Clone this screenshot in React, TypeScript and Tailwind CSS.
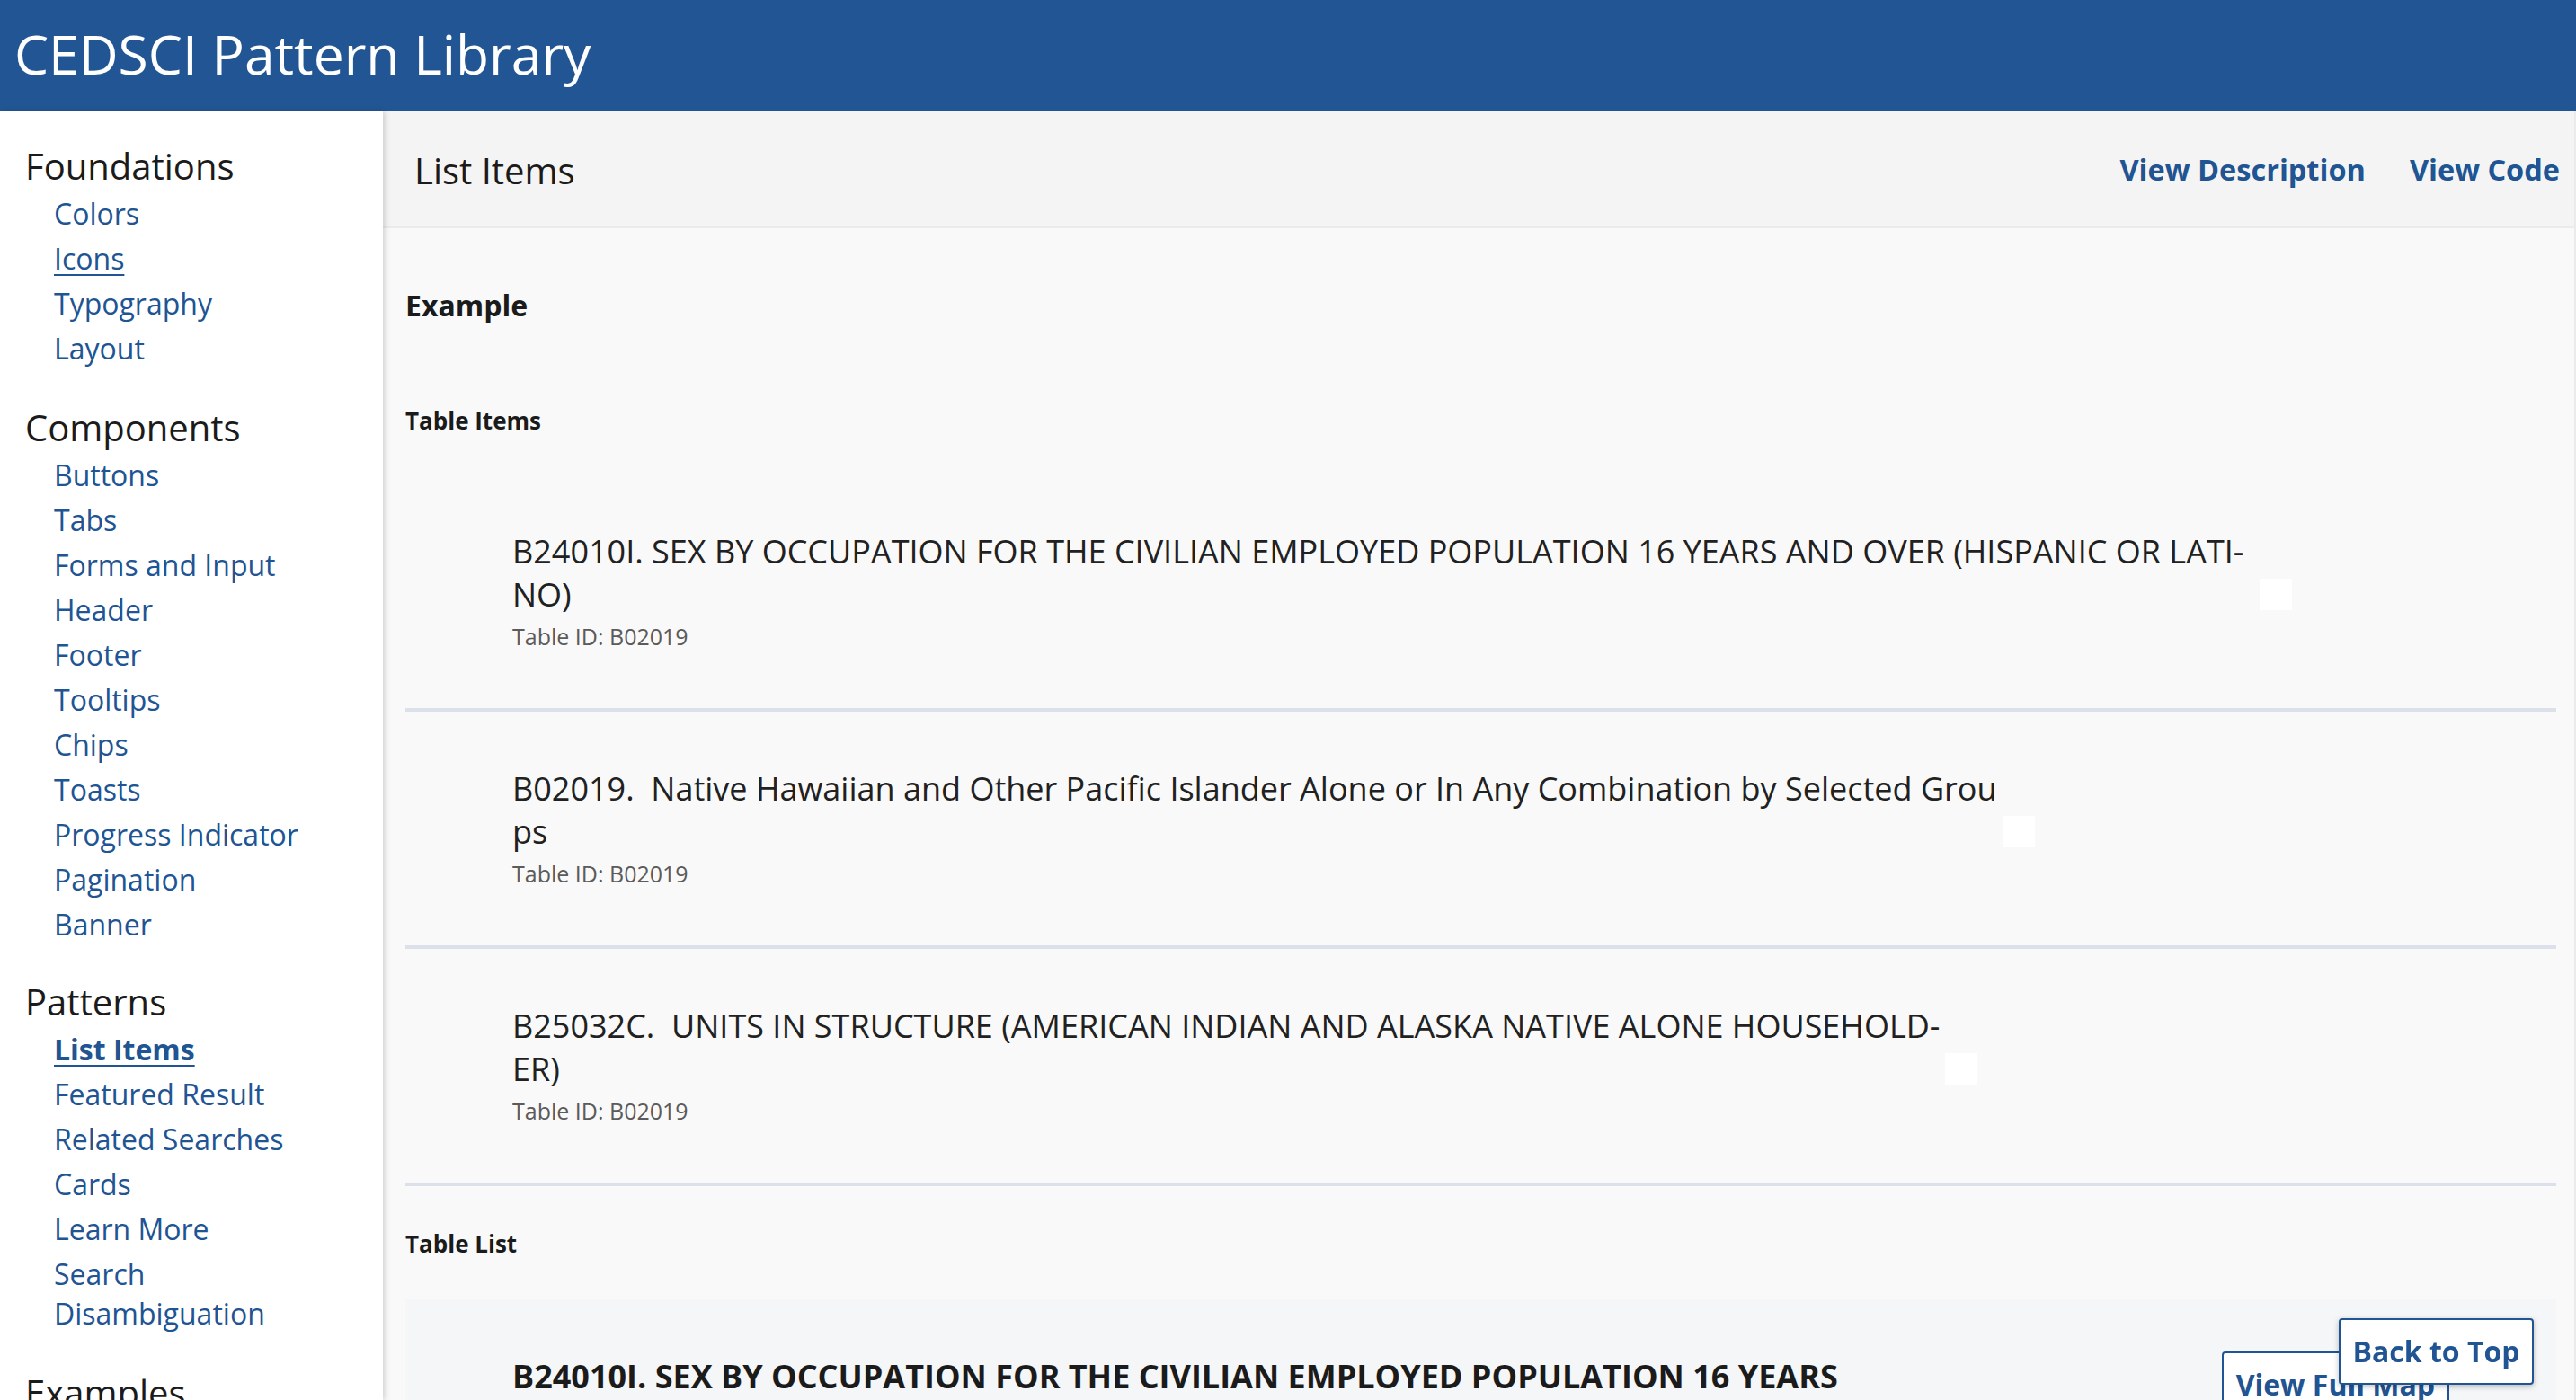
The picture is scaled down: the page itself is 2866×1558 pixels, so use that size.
import React from 'react'

type NavGroup = {
  title: string
  links: { label: string; active?: boolean; underline?: boolean }[]
}

const NAV: NavGroup[] = [
  {
    title: 'Foundations',
    links: [{ label: 'Colors' }, { label: 'Icons', underline: true }, { label: 'Typography' }, { label: 'Layout' }],
  },
  {
    title: 'Components',
    links: [
      { label: 'Buttons' },
      { label: 'Tabs' },
      { label: 'Forms and Input' },
      { label: 'Header' },
      { label: 'Footer' },
      { label: 'Tooltips' },
      { label: 'Chips' },
      { label: 'Toasts' },
      { label: 'Progress Indicator' },
      { label: 'Pagination' },
      { label: 'Banner' },
    ],
  },
  {
    title: 'Patterns',
    links: [
      { label: 'List Items', active: true },
      { label: 'Featured Result' },
      { label: 'Related Searches' },
      { label: 'Cards' },
      { label: 'Learn More' },
      { label: 'Search Disambiguation' },
    ],
  },
  {
    title: 'Examples',
    links: [{ label: 'Search Results' }, { label: 'Table View' }],
  },
]

const ITEMS = [
  {
    lines: ['B24010I. SEX BY OCCUPATION FOR THE CIVILIAN EMPLOYED POPULATION 16 YEARS AND OVER (HISPANIC OR LATI-', 'NO)'],
    extra: 'pr-[12px]',
  },
  {
    lines: ['B02019.\u00a0 Native Hawaiian and Other Pacific Islander Alone or In Any Combination by Selected Grou', 'ps'],
    extra: '',
  },
  {
    lines: ['B25032C.\u00a0 UNITS IN STRUCTURE (AMERICAN INDIAN AND ALASKA NATIVE ALONE HOUSEHOLD-', 'ER)'],
    extra: '',
  },
]

function Sidebar() {
  return (
    <aside className="relative z-10 w-[426px] shrink-0 bg-white pt-[33px] pl-[28px] pr-[40px] shadow-[3px_0_6px_rgba(0,0,0,0.14)]">
      {NAV.map((group, gi) => (
        <div key={group.title} className={gi === 1 ? 'mb-[33px]' : 'mb-[35px]'}>
          <h2 className="text-[40px] leading-[56px] text-[#1b1b1b]">{group.title}</h2>
          <ul>
            {group.links.map((link) => (
              <li key={link.label} className="pl-[32px] py-[3px]">
                <a
                  href="#"
                  className={`text-[32px] leading-[44px] text-[#205493] ${
                    link.active ? 'font-bold underline decoration-2 underline-offset-[5px]' : ''
                  } ${link.underline ? 'underline decoration-2 underline-offset-[5px]' : ''}`}
                >
                  {link.label}
                </a>
              </li>
            ))}
          </ul>
        </div>
      ))}
    </aside>
  )
}

export default function App() {
  return (
    <div className="h-screen overflow-hidden bg-[#f9f9f9] font-['Open_Sans',sans-serif] text-[#1b1b1b] flex flex-col">
      {/* Header */}
      <header className="h-[124px] shrink-0 bg-[#225593] flex items-center pl-[16px]">
        <h1 className="text-[60.5px] leading-none text-white -mt-[3px]">CEDSCI Pattern Library</h1>
      </header>

      <div className="flex flex-1 min-h-0">
        <Sidebar />

        <main className="flex-1 min-w-0 border-r-2 border-[#ebebeb]">
          {/* Title bar */}
          <div className="h-[130px] bg-[#f4f4f4] border-b-2 border-[#ebebeb] flex items-center justify-between pt-[3px] pl-[35px] pr-[16px]">
            <h2 className="text-[40px] leading-[56px]">List Items</h2>
            <div className="flex gap-[49px]">
              <a href="#" className="text-[32.5px] font-bold text-[#205493]">
                View Description
              </a>
              <a href="#" className="text-[32.5px] font-bold text-[#205493]">
                View Code
              </a>
            </div>
          </div>

          {/* Body */}
          <div className="pt-[64px] pl-[25px] pr-[20px]">
            <h3 className="text-[32px] leading-[44px] font-bold">Example</h3>
            <h4 className="mt-[88px] text-[26px] leading-[36px] font-bold">Table Items</h4>

            <ul className="mt-[42px]">
              {ITEMS.map((item, i) => (
                <li key={i} className="border-b-4 border-[#dce0ea] pl-[119px] pt-[62px] pb-[64px]">
                  <div className="flex items-end gap-[6px]">
                    <p className={`text-[36px] leading-[48px] text-[#212121] whitespace-nowrap ${item.extra}`}>
                      {item.lines[0]}
                      <br />
                      {item.lines[1]}
                    </p>
                    <span className="w-[36px] h-[35px] bg-white mb-[7px] shrink-0" />
                  </div>
                  <p className="mt-[6px] text-[25px] leading-[32px] text-[#5b5b5b]">Table ID: B02019</p>
                </li>
              ))}
            </ul>

            <h4 className="mt-[46px] text-[26px] leading-[36px] font-bold">Table List</h4>

            <div className="mt-[44px] bg-[#f5f6f8] px-[119px] pt-[62px] pb-[62px] flex items-start justify-between">
              <p className="max-w-[1520px] text-[36px] leading-[48px] font-bold text-[#1b1b1b]">
                B24010I. SEX BY OCCUPATION FOR THE CIVILIAN EMPLOYED POPULATION 16 YEARS AND OVER (HISPANIC OR LATINO)
              </p>
              <button className="-mt-[4px] shrink-0 border-2 border-[#205493] rounded-[4px] bg-white px-[14px] py-[10px] text-[32px] leading-[50px] font-bold text-[#205493]">
                View Full Map
              </button>
            </div>
          </div>
        </main>
      </div>

      {/* Back to top */}
      <button className="fixed bottom-[17px] right-[47px] h-[74px] w-[217px] border-2 border-[#205493] rounded-[4px] bg-white text-[32px] font-bold text-[#205493] shadow-[0_2px_6px_rgba(0,0,0,0.25)]">
        Back to Top
      </button>
    </div>
  )
}
